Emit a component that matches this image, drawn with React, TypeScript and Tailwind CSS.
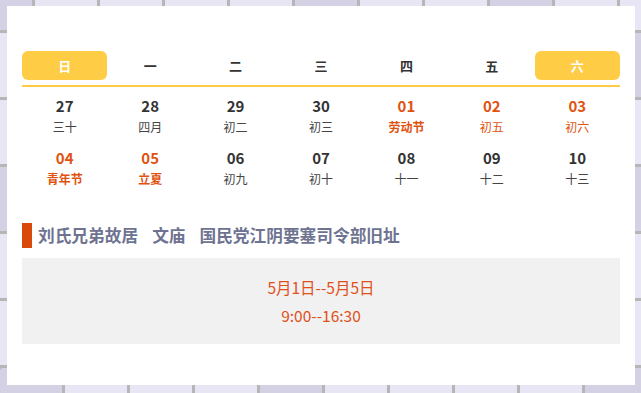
const WEEK = ["日", "一", "二", "三", "四", "五", "六"];

type Day = { n: string; l: string; hot?: boolean; fest?: boolean };

const DAYS: Day[] = [
  { n: "27", l: "三十" },
  { n: "28", l: "四月" },
  { n: "29", l: "初二" },
  { n: "30", l: "初三" },
  { n: "01", l: "劳动节", hot: true, fest: true },
  { n: "02", l: "初五", hot: true },
  { n: "03", l: "初六", hot: true },
  { n: "04", l: "青年节", hot: true, fest: true },
  { n: "05", l: "立夏", hot: true, fest: true },
  { n: "06", l: "初九" },
  { n: "07", l: "初十" },
  { n: "08", l: "十一" },
  { n: "09", l: "十二" },
  { n: "10", l: "十三" },
];

// tile rows behind the card: [offset, indexes of the darker tiles]
const ROWS: [string, number[]][] = [
  ["-ml-[30px]", [0, 5, 8]],
  ["-ml-[2px]", [2, 9]],
  ["-ml-[30px]", [1, 6]],
  ["-ml-[2px]", [0, 4, 9]],
  ["-ml-[30px]", [3, 7]],
  ["-ml-[2px]", [1, 8]],
  ["ml-0", [0, 4, 9]],
];

function TileBackdrop() {
  return (
    <div className="absolute inset-0 -mt-[34px] flex flex-col gap-[3px] bg-[#b6b6b6]">
      {ROWS.map(([off, dark], r) => (
        <div key={r} className={`flex gap-[3px] ${off}`}>
          {Array.from({ length: 11 }).map((_, i) => (
            <div
              key={i}
              className={
                dark.includes(i)
                  ? "h-[64px] w-[62px] shrink-0 rounded-[3px] bg-[#d4d1e4]"
                  : "h-[64px] w-[62px] shrink-0 rounded-[3px] bg-[#e8e6f4]"
              }
            />
          ))}
        </div>
      ))}
    </div>
  );
}

export default function App() {
  return (
    <div className="relative h-[393px] w-[641px] overflow-hidden font-['Noto_Sans_CJK_SC',sans-serif]">
      <TileBackdrop />

      <div className="relative ml-[7px] mt-[6px] h-[379px] w-[628px] bg-white px-[15px] pt-[45px]">
        {/* week header */}
        <div className="grid h-[29px] grid-cols-7">
          {WEEK.map((w, i) => {
            const weekend = i === 0 || i === 6;
            return (
              <div
                key={w}
                className={
                  weekend
                    ? "flex items-center justify-center rounded-[6px] bg-[#ffcd45] text-[13px] font-bold text-white"
                    : "flex items-center justify-center text-[13px] font-bold text-[#333]"
                }
              >
                {w}
              </div>
            );
          })}
        </div>
        <div className="mt-[5px] h-[2px] bg-[#ffcd45]" />

        {/* dates */}
        <div className="grid grid-cols-7 gap-y-[12px] pt-[9px]">
          {DAYS.map((d) => (
            <div key={d.n} className="flex flex-col items-center">
              <span
                className={
                  d.hot
                    ? "text-[15px] font-bold leading-[20px] text-[#df5311]"
                    : "text-[15px] font-bold leading-[20px] text-[#333]"
                }
              >
                {d.n}
              </span>
              <span
                className={
                  d.fest
                    ? "mt-[2px] text-[12px] font-bold leading-[18px] text-[#df5311]"
                    : d.hot
                      ? "mt-[2px] text-[12px] leading-[18px] text-[#df5311]"
                      : "mt-[2px] text-[12px] leading-[18px] text-[#444]"
                }
              >
                {d.l}
              </span>
            </div>
          ))}
        </div>

        {/* places */}
        <div className="mt-[35px] flex h-[25px] items-center">
          <div className="h-[25px] w-[10px] bg-[#d9490a]" />
          <div className="ml-[6px] flex gap-[14px] text-[16.7px] font-bold text-[#6e7391]">
            <span>刘氏兄弟故居</span>
            <span>文庙</span>
            <span>国民党江阴要塞司令部旧址</span>
          </div>
        </div>

        <div className="mt-[10px] flex h-[86px] flex-col items-center justify-center bg-[#f1f1f1] text-[15.5px] leading-[28px] text-[#e0501a]">
          <p>5月1日--5月5日</p>
          <p>9:00--16:30</p>
        </div>
      </div>
    </div>
  );
}
